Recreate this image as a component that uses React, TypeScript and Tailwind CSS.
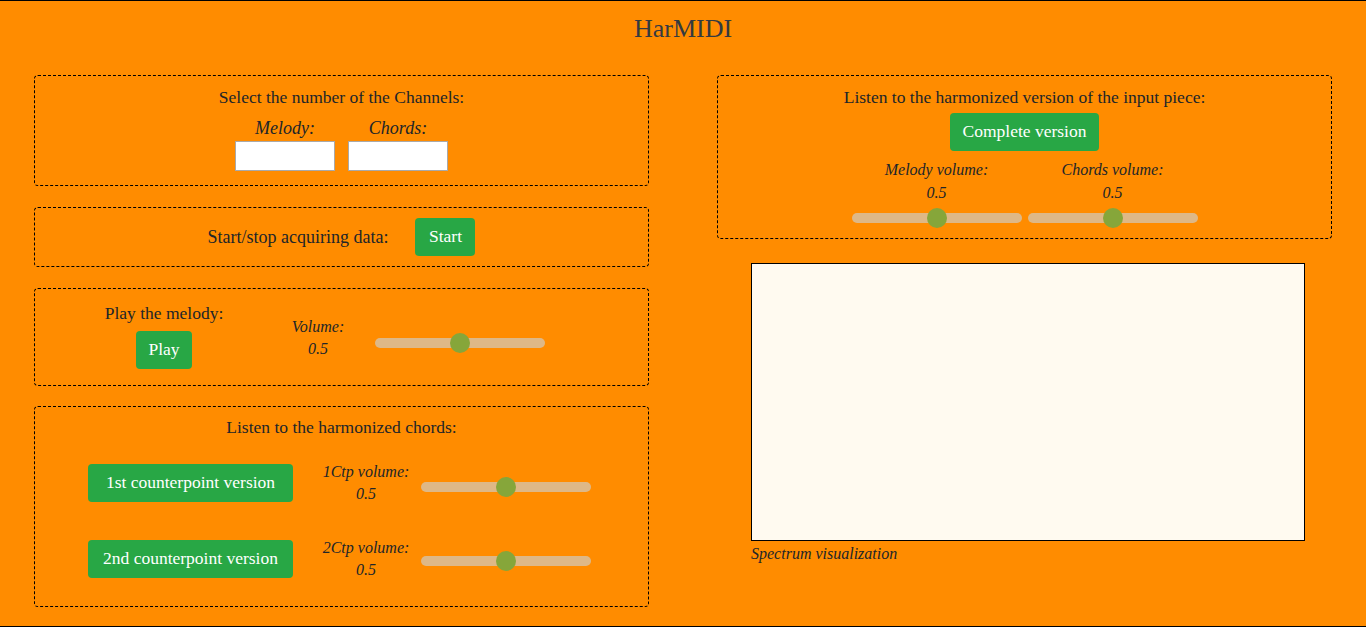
import React from 'react';

const serif = { fontFamily: '"Liberation Serif", "DejaVu Serif", serif' };

const Slider = ({ value = 0.5 }: { value?: number }) => (
  <div className="relative w-[170px] h-[20px] flex items-center">
    <div className="w-full h-[10px] rounded-full bg-[#deb887]" />
    <div
      className="absolute top-0 w-[20px] h-[20px] rounded-full bg-[#86a63a]"
      style={{ left: `calc(${value * 100}% - 10px)` }}
    />
  </div>
);

const GreenButton = ({ label, className = '' }: { label: string; className?: string }) => (
  <button className={`h-[38px] rounded-[4px] bg-[#28a745] text-white text-[17.5px] leading-none ${className}`}>
    {label}
  </button>
);

const Box = ({ children, className = '' }: { children: React.ReactNode; className?: string }) => (
  <div className={`border border-dashed border-black rounded-[4px] ${className}`}>{children}</div>
);

const VolumeLabel = ({ label, gap = 'mt-[1px]' }: { label: string; gap?: string }) => (
  <div className="flex flex-col items-center italic">
    <div className="text-[16px] leading-[20px]">{label}</div>
    <div className={`text-[16px] leading-[22px] ${gap}`}>0.5</div>
  </div>
);

const App: React.FC = () => {
  return (
    <div
      style={serif}
      className="w-[1366px] h-[627px] bg-[#ff8c00] text-[#212529] border-t border-b border-black flex flex-col overflow-hidden"
    >
      <h1 className="mt-[11px] text-center text-[26px] leading-[34px] text-[#343a40]">HarMIDI</h1>

      <div className="mt-[29px] px-[34px] flex justify-between">
        {/* Left column */}
        <div className="w-[615px] flex flex-col">
          <Box className="h-[111px] pt-[10px] flex flex-col items-center">
            <div className="text-[17.5px] leading-[22px]">Select the number of the Channels:</div>
            <div className="mt-[10px] flex gap-[13px]">
              <div className="flex flex-col items-center">
                <div className="italic text-[18px] leading-[20px]">Melody:</div>
                <input className="mt-[3px] w-[100px] h-[30px] bg-white border border-[#a9a9a9] outline-none" />
              </div>
              <div className="flex flex-col items-center">
                <div className="italic text-[18px] leading-[20px]">Chords:</div>
                <input className="mt-[3px] w-[100px] h-[30px] bg-white border border-[#a9a9a9] outline-none" />
              </div>
            </div>
          </Box>

          <Box className="mt-[21px] h-[60px] flex items-center justify-center gap-[27px]">
            <div className="text-[18px] leading-[22px]">Start/stop acquiring data:</div>
            <GreenButton label="Start" className="w-[60px]" />
          </Box>

          <Box className="mt-[21px] h-[98px] pt-[13px] pl-[49px] flex items-start">
            <div className="w-[160px] flex flex-col items-center">
              <div className="text-[17.5px] leading-[22px]">Play the melody:</div>
              <GreenButton label="Play" className="mt-[7px] w-[56px]" />
            </div>
            <div className="w-[100px] ml-[24px] mt-[15px]">
              <VolumeLabel label="Volume:" />
            </div>
            <div className="ml-[7px] mt-[31px]">
              <Slider />
            </div>
          </Box>

          <Box className="mt-[20px] h-[201px] pt-[9px] flex flex-col">
            <div className="text-center text-[17.5px] leading-[22px]">Listen to the harmonized chords:</div>
            <div className="mt-[24px] pl-[53px] flex items-start">
              <GreenButton label="1st counterpoint version" className="mt-[2px] w-[205px]" />
              <div className="w-[100px] ml-[23px]">
                <VolumeLabel label="1Ctp volume:" />
              </div>
              <div className="ml-[5px] mt-[15px]">
                <Slider />
              </div>
            </div>
            <div className="mt-[33px] pl-[53px] flex items-start">
              <GreenButton label="2nd counterpoint version" className="mt-[2px] w-[205px]" />
              <div className="w-[100px] ml-[23px]">
                <VolumeLabel label="2Ctp volume:" />
              </div>
              <div className="ml-[5px] mt-[13px]">
                <Slider />
              </div>
            </div>
          </Box>
        </div>

        {/* Right column */}
        <div className="w-[615px] flex flex-col">
          <Box className="h-[164px] pt-[10px] flex flex-col items-center">
            <div className="text-[17.5px] leading-[22px]">Listen to the harmonized version of the input piece:</div>
            <GreenButton label="Complete version" className="mt-[5px] w-[149px]" />
            <div className="mt-[9px] flex gap-[6px]">
              <div className="w-[170px] flex flex-col items-center">
                <VolumeLabel label="Melody volume:" gap="mt-[2px]" />
                <div className="mt-[4px]">
                  <Slider />
                </div>
              </div>
              <div className="w-[170px] flex flex-col items-center">
                <VolumeLabel label="Chords volume:" gap="mt-[2px]" />
                <div className="mt-[4px]">
                  <Slider />
                </div>
              </div>
            </div>
          </Box>

          <div className="mt-[24px] ml-[34px] w-[554px] h-[278px] bg-[#fffaf0] border border-black" />
          <div className="ml-[34px] mt-[4px] italic text-[16px] leading-[18px]">Spectrum visualization</div>
        </div>
      </div>
    </div>
  );
};

export default App;
